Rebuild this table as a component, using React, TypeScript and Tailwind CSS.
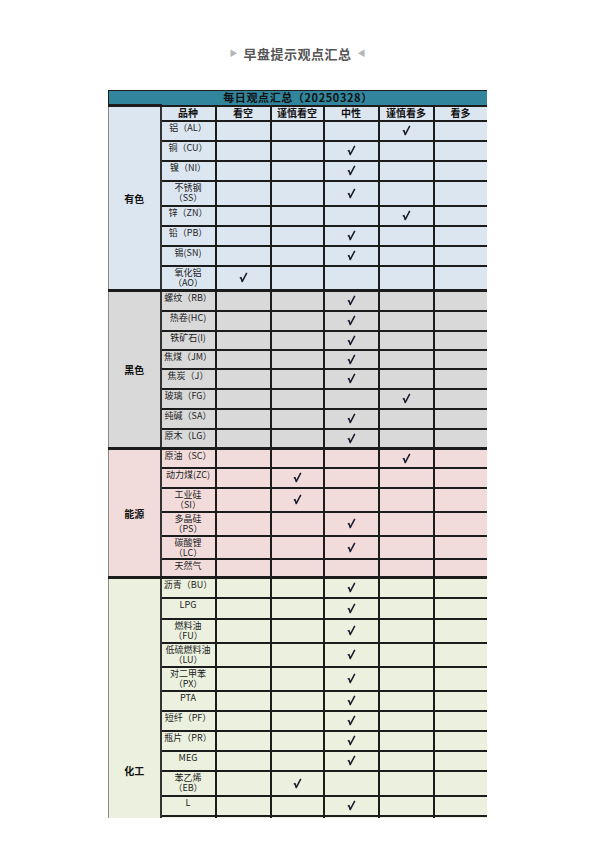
import React from 'react';

type Row = { name: string[]; mark: number | null; h: number };
type Section = { label: string; bg: string; rows: Row[] };

// mark: 0 看空, 1 谨慎看空, 2 中性, 3 谨慎看多, 4 看多
const sections: Section[] = [
  {
    label: '有色',
    bg: 'bg-[#dce6f1]',
    rows: [
      { name: ['铝（AL）'], mark: 3, h: 20 },
      { name: ['铜（CU）'], mark: 2, h: 20 },
      { name: ['镍（NI）'], mark: 2, h: 20 },
      { name: ['不锈钢', '（SS）'], mark: 2, h: 25 },
      { name: ['锌（ZN）'], mark: 3, h: 20 },
      { name: ['铅（PB）'], mark: 2, h: 20 },
      { name: ['锡(SN)'], mark: 2, h: 20 },
      { name: ['氧化铝', '（AO）'], mark: 0, h: 25 },
    ],
  },
  {
    label: '黑色',
    bg: 'bg-[#d9d9d9]',
    rows: [
      { name: ['螺纹（RB）'], mark: 2, h: 20 },
      { name: ['热卷(HC)'], mark: 2, h: 20 },
      { name: ['铁矿石(I)'], mark: 2, h: 19 },
      { name: ['焦煤（JM）'], mark: 2, h: 19 },
      { name: ['焦炭（J）'], mark: 2, h: 20 },
      { name: ['玻璃（FG）'], mark: 3, h: 20 },
      { name: ['纯碱（SA）'], mark: 2, h: 20 },
      { name: ['原木（LG）'], mark: 2, h: 20 },
    ],
  },
  {
    label: '能源',
    bg: 'bg-[#f2dcdb]',
    rows: [
      { name: ['原油（SC）'], mark: 3, h: 19 },
      { name: ['动力煤(ZC)'], mark: 1, h: 20 },
      { name: ['工业硅', '（SI）'], mark: 1, h: 24 },
      { name: ['多晶硅', '（PS）'], mark: 2, h: 24 },
      { name: ['碳酸锂', '（LC）'], mark: 2, h: 23 },
      { name: ['天然气'], mark: null, h: 19 },
    ],
  },
  {
    label: '化工',
    bg: 'bg-[#ebf1de]',
    rows: [
      { name: ['沥青（BU）'], mark: 2, h: 20 },
      { name: ['LPG'], mark: 2, h: 21 },
      { name: ['燃料油', '（FU）'], mark: 2, h: 24 },
      { name: ['低硫燃料油', '（LU）'], mark: 2, h: 24 },
      { name: ['对二甲苯', '（PX）'], mark: 2, h: 24 },
      { name: ['PTA'], mark: 2, h: 20 },
      { name: ['短纤（PF）'], mark: 2, h: 20 },
      { name: ['瓶片（PR）'], mark: 2, h: 20 },
      { name: ['MEG'], mark: 2, h: 20 },
      { name: ['苯乙烯', '（EB）'], mark: 1, h: 25 },
      { name: ['L'], mark: 2, h: 20 },
      { name: ['PP'], mark: 2, h: 20 },
      { name: ['V'], mark: 2, h: 20 },
      { name: ['甲醇（MA）'], mark: 2, h: 20 },
      { name: ['尿素（UR）'], mark: 2, h: 20 },
      { name: ['烧碱（SH）'], mark: 2, h: 20 },
      { name: ['纸浆（SP）'], mark: 2, h: 20 },
      { name: ['橡胶（RU）'], mark: 2, h: 28 },
    ],
  },
];

const heads = ['看空', '谨慎看空', '中性', '谨慎看多', '看多'];

const cell = 'border-2 border-[#1c1c1c] p-0';
const catCell =
  'border-l border-l-[#8a8a8a] border-y-[3px] border-y-[#1c1c1c] border-r-2 border-r-[#333] p-0 text-center align-middle font-bold text-[10px] text-[#111]';

const Check = () => (
  <svg width="9" height="11" viewBox="0 0 9 11" className="inline-block align-middle">
    <path d="M0.8 6.2 L2 5.6 L3.2 9.6 L7.8 0.8" fill="none" stroke="#161a2a" strokeWidth="1.5" strokeLinejoin="round" />
  </svg>
);

export default function App() {
  return (
    <div className="w-[595px] h-[842px] bg-white font-['Noto_Sans_CJK_SC','Noto_Sans',sans-serif]">
      <div className="pt-[44px] h-[90px] flex justify-center">
        <div className="flex items-center gap-[6px] h-[18px]">
          <span className="text-[8px] text-[#b5b5b5] leading-none">▶</span>
          <span className="text-[13px] font-bold text-[#555] leading-none tracking-[0.5px]">早盘提示观点汇总</span>
          <span className="text-[8px] text-[#b5b5b5] leading-none">◀</span>
        </div>
      </div>

      <div className="ml-[108px] w-[379px] h-[728px] overflow-hidden">
        <table className="w-[379px] table-fixed border-collapse text-[9px] text-[#222]">
          <colgroup>
            <col className="w-[52px]" />
            <col className="w-[55px]" />
            <col className="w-[55px]" />
            <col className="w-[53px]" />
            <col className="w-[55px]" />
            <col className="w-[55px]" />
            <col className="w-[54px]" />
          </colgroup>
          <tbody>
            <tr className="h-[15px] bg-[#31859c]">
              <td colSpan={7} className="border border-[#1c1c1c] p-0 text-center text-[11px] font-bold text-[#111] leading-[13px] tracking-[0.6px]">
                每日观点汇总（20250328）
              </td>
            </tr>
            {sections.map((s, si) => (
              <React.Fragment key={s.label}>
                {si === 0 && (
                  <tr className={`h-[15px] ${s.bg}`}>
                    <td rowSpan={s.rows.length + 1} className={catCell}>
                      {s.label}
                    </td>
                    <td className={`${cell} text-center font-bold text-[10px] leading-[12px] text-[#111]`}>品种</td>
                    {heads.map((h) => (
                      <td key={h} className={`${cell} text-center font-bold text-[10px] leading-[12px] text-[#111]`}>
                        {h}
                      </td>
                    ))}
                  </tr>
                )}
                {s.rows.map((r, ri) => (
                  <tr key={r.name[0]} className={s.bg} style={{ height: r.h }}>
                    {si > 0 && ri === 0 && (
                      <td rowSpan={s.rows.length} className={catCell}>
                        {s.label}
                      </td>
                    )}
                    <td
                      className={`${cell} ${ri === 0 && si > 0 ? 'border-t-[3px]' : ''} text-center align-top whitespace-nowrap leading-[10px] pt-[1px]`}
                    >
                      {r.name.map((n) => (
                        <div key={n}>{n}</div>
                      ))}
                    </td>
                    {heads.map((h, ci) => (
                      <td
                        key={h}
                        className={`${cell} ${ri === 0 && si > 0 ? 'border-t-[3px]' : ''} text-center align-middle leading-none`}
                      >
                        {r.mark === ci ? <Check /> : null}
                      </td>
                    ))}
                  </tr>
                ))}
              </React.Fragment>
            ))}
          </tbody>
        </table>
      </div>
    </div>
  );
}
